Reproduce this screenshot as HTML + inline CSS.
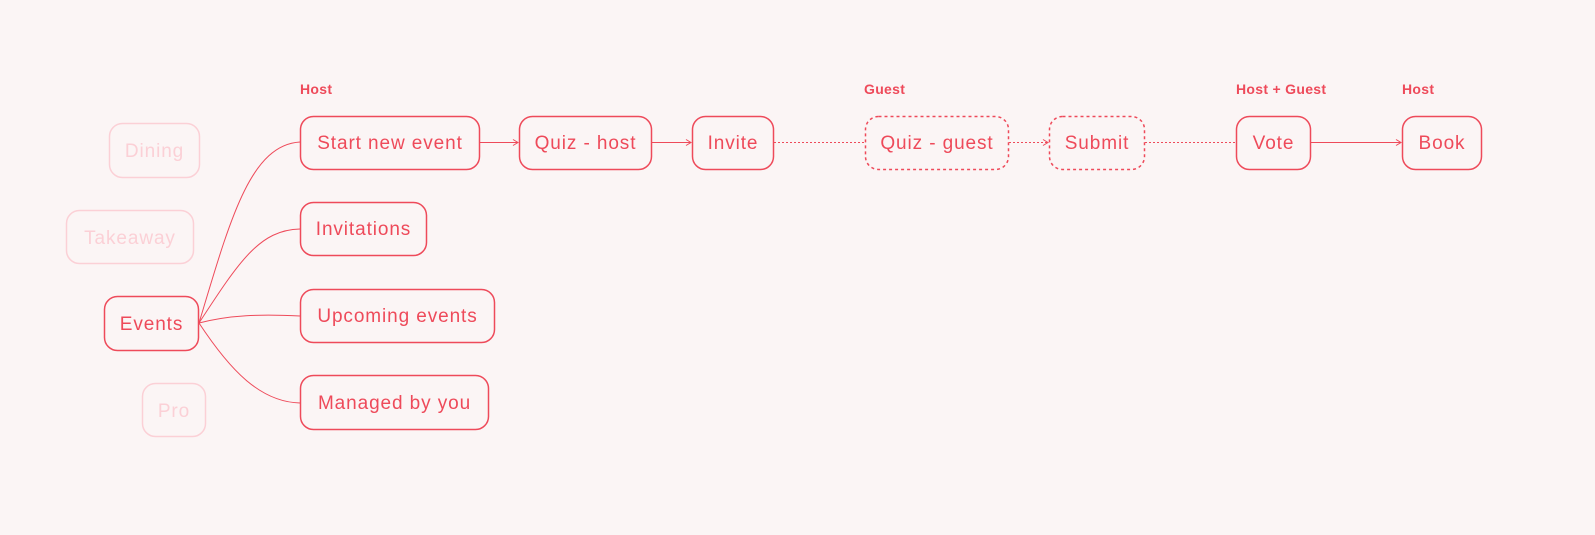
<!DOCTYPE html>
<html><head><meta charset="utf-8"><style>
html,body{margin:0;padding:0;background:#fbf5f5;}
svg{display:block}
text{font-family:"Liberation Sans",sans-serif;}
.t{font-size:19px;fill:#ee4a5a;text-anchor:middle;letter-spacing:0.9px;}
.f{font-size:19px;fill:#fbd0d6;text-anchor:middle;letter-spacing:0.9px;}
.l{font-size:14px;font-weight:bold;fill:#ee4a5a;letter-spacing:0.3px;}
.b{fill:none;stroke:#ee4a5a;stroke-width:1.5;}
.d{fill:none;stroke:#ee4a5a;stroke-width:1.5;stroke-dasharray:3 3;}
.fb{fill:none;stroke:#fbd0d6;stroke-width:1.5;}
.c{fill:none;stroke:#ee4a5a;stroke-width:1;}
.dc{fill:none;stroke:#ee4a5a;stroke-width:1;stroke-dasharray:2 2;}
</style></head><body>
<svg width="1595" height="535" viewBox="0 0 1595 535">
<text class="l" x="300" y="94">Host</text>
<text class="l" x="864" y="94">Guest</text>
<text class="l" x="1236" y="94">Host + Guest</text>
<text class="l" x="1402" y="94">Host</text>

<rect class="fb" x="109.5" y="123.5" width="90" height="54" rx="13"/><text class="f" x="154.5" y="157">Dining</text>
<rect class="fb" x="66.5" y="210.5" width="127" height="53" rx="13"/><text class="f" x="130" y="244">Takeaway</text>
<rect class="fb" x="142.5" y="383.5" width="63" height="53" rx="13"/><text class="f" x="174" y="417">Pro</text>

<rect class="b" x="104.5" y="296.5" width="94" height="54" rx="13"/><text class="t" x="151.5" y="330">Events</text>

<path class="c" d="M199 323 C230 220 250 145 300 142"/>
<path class="c" d="M199 323 C240 260 260 230 300 229"/>
<path class="c" d="M199 323 C230 315 260 314 300 316"/>
<path class="c" d="M199 323 C230 370 260 402 300 403"/>

<rect class="b" x="300.5" y="116.5" width="179" height="53" rx="13"/><text class="t" x="390" y="149">Start new event</text>
<rect class="b" x="300.5" y="202.5" width="126" height="53" rx="13"/><text class="t" x="363.5" y="235">Invitations</text>
<rect class="b" x="300.5" y="289.5" width="194" height="53" rx="13"/><text class="t" x="397.5" y="322">Upcoming events</text>
<rect class="b" x="300.5" y="375.5" width="188" height="54" rx="13"/><text class="t" x="394.5" y="409">Managed by you</text>

<rect class="b" x="519.5" y="116.5" width="132" height="53" rx="13"/><text class="t" x="585.5" y="149">Quiz - host</text>
<rect class="b" x="692.5" y="116.5" width="81" height="53" rx="13"/><text class="t" x="733" y="149">Invite</text>
<rect class="d" x="865.5" y="116.5" width="143" height="53" rx="13"/><text class="t" x="937" y="149">Quiz - guest</text>
<rect class="d" x="1049.5" y="116.5" width="95" height="53" rx="13"/><text class="t" x="1097" y="149">Submit</text>
<rect class="b" x="1236.5" y="116.5" width="74" height="53" rx="13"/><text class="t" x="1273.5" y="149">Vote</text>
<rect class="b" x="1402.5" y="116.5" width="79" height="53" rx="13"/><text class="t" x="1442" y="149">Book</text>

<path class="c" d="M480 142.5H518 M513 139.5l5 3-5 3"/>
<path class="c" d="M652 142.5H691 M686 139.5l5 3-5 3"/>
<path class="dc" d="M774 142.5H865"/>
<path class="dc" d="M1009 142.5H1048"/><path class="c" d="M1043 139.5l5 3-5 3"/>
<path class="dc" d="M1145 142.5H1236"/>
<path class="c" d="M1311 142.5H1401 M1396 139.5l5 3-5 3"/>
</svg>
</body></html>
